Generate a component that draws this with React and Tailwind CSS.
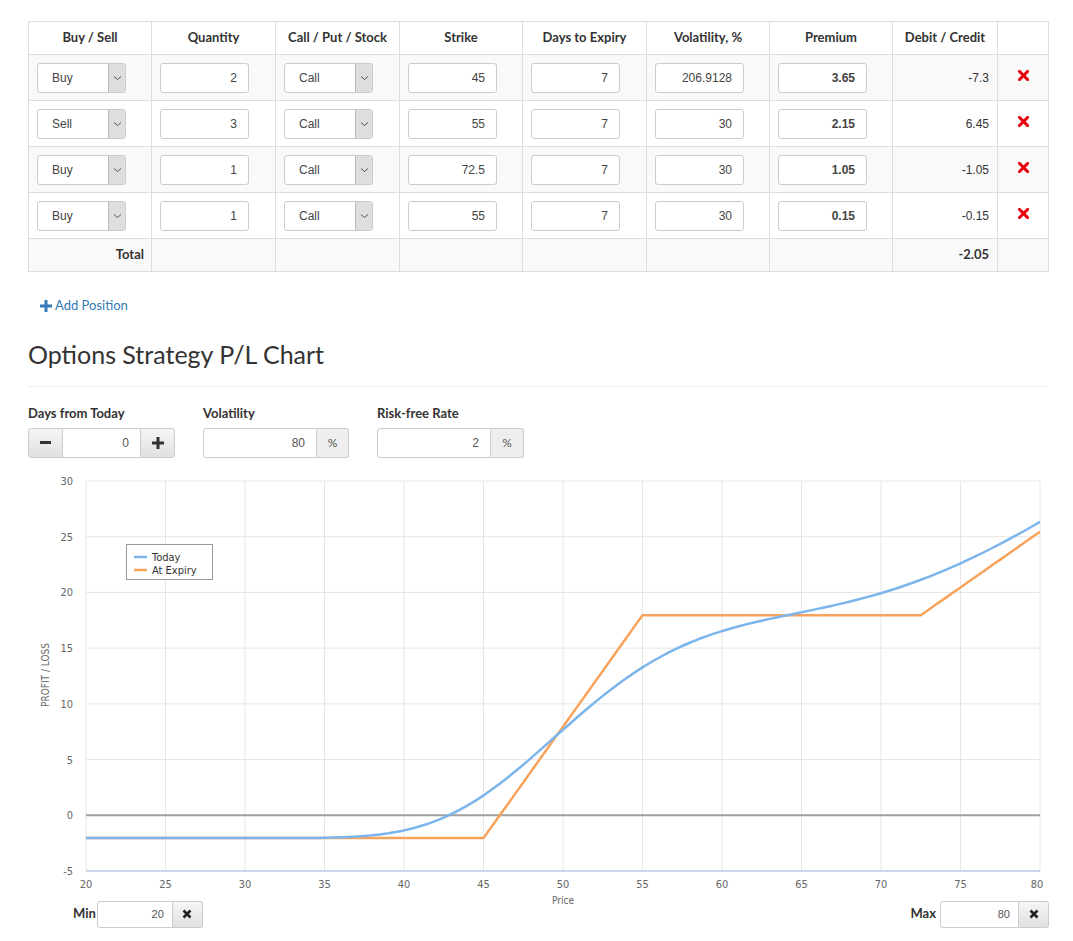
import React from "react";

const legs = [
  { side: "Buy", qty: 2, type: "Call", strike: 45, days: 7, vol: "206.9128", premium: "3.65", dc: "-7.3" },
  { side: "Sell", qty: 3, type: "Call", strike: 55, days: 7, vol: "30", premium: "2.15", dc: "6.45" },
  { side: "Buy", qty: 1, type: "Call", strike: 72.5, days: 7, vol: "30", premium: "1.05", dc: "-1.05" },
  { side: "Buy", qty: 1, type: "Call", strike: 55, days: 7, vol: "30", premium: "0.15", dc: "-0.15" },
];

const headers = ["Buy / Sell", "Quantity", "Call / Put / Stock", "Strike", "Days to Expiry", "Volatility, %", "Premium", "Debit / Credit", ""];
const widths = ["w-[123px]", "w-[124px]", "w-[124px]", "w-[123px]", "w-[124px]", "w-[123px]", "w-[123px]", "w-[105px]", "w-[51px]"];

// normal cdf
const ncdf = (x) => {
  const t = 1 / (1 + 0.2316419 * Math.abs(x));
  const d = 0.3989423 * Math.exp((-x * x) / 2);
  const p = d * t * (0.3193815 + t * (-0.3565638 + t * (1.781478 + t * (-1.821256 + t * 1.330274))));
  return x > 0 ? 1 - p : p;
};

const callPrice = (S, K, T, r, v) => {
  const sq = v * Math.sqrt(T);
  const d1 = (Math.log(S / K) + (r + (v * v) / 2) * T) / sq;
  const d2 = d1 - sq;
  return S * ncdf(d1) - K * Math.exp(-r * T) * ncdf(d2);
};

const pl = (S, today) => {
  let total = -2.05;
  legs.forEach((l) => {
    const sign = l.side === "Buy" ? 1 : -1;
    const val = today ? callPrice(S, l.strike, 7 / 365, 0.02, 0.8) : Math.max(S - l.strike, 0);
    total += sign * l.qty * val;
  });
  return total;
};

const X0 = 58;
const X1 = 1012;
const Y0 = 11;
const Y1 = 401;
const px = (s) => X0 + ((s - 20) * (X1 - X0)) / 60;
const py = (v) => Y0 + ((30 - v) * (Y1 - Y0)) / 35;

const buildPath = (today) => {
  const pts = [];
  for (let s = 20; s <= 80.001; s += 0.5) pts.push(`${px(s).toFixed(1)},${py(pl(s, today)).toFixed(1)}`);
  return "M" + pts.join(" L");
};

const Chevron = () => (
  <svg width="9" height="6" viewBox="0 0 9 6">
    <path d="M1 1.5 L4.5 4.5 L8 1.5" fill="none" stroke="#555" strokeWidth="1" />
  </svg>
);

const Select = ({ value }) => (
  <div className="flex h-[30px] w-[89px] rounded-[3px] border border-[#ccc] bg-white overflow-hidden">
    <div className="flex-1 flex items-center pl-[14px] text-[12px] text-[#444] font-['Liberation_Sans',sans-serif]">{value}</div>
    <div className="w-[17px] flex items-center justify-center bg-[#dedede] border-l border-[#bbb]">
      <Chevron />
    </div>
  </div>
);

const NumInput = ({ value, bold }) => (
  <div
    className={`flex h-[30px] w-[89px] items-center justify-end pr-[11px] rounded-[3px] border border-[#ccc] bg-white text-[12px] text-[#444] font-['Liberation_Sans',sans-serif] ${
      bold ? "font-bold text-[#333]" : ""
    }`}
  >
    {value}
  </div>
);

const RedX = () => (
  <svg width="11" height="11" viewBox="0 0 12 12">
    <path d="M1.5 1.5 L10.5 10.5 M10.5 1.5 L1.5 10.5" stroke="#e8000b" strokeWidth="3.2" strokeLinecap="square" />
  </svg>
);

const Plus = ({ color = "#333", size = 12 }) => (
  <svg width={size} height={size} viewBox="0 0 12 12">
    <path d="M4.5 0 H7.5 V4.5 H12 V7.5 H7.5 V12 H4.5 V7.5 H0 V4.5 H4.5 Z" fill={color} />
  </svg>
);

const DarkX = () => (
  <svg width="10" height="10" viewBox="0 0 10 10">
    <path d="M1.5 1.5 L8.5 8.5 M8.5 1.5 L1.5 8.5" stroke="#222" strokeWidth="2.6" />
  </svg>
);

const btn = "flex items-center justify-center border border-[#ccc] bg-linear-to-b from-[#f6f6f6] to-[#e0e0e0]";

const Chart = () => {
  const xs = [20, 25, 30, 35, 40, 45, 50, 55, 60, 65, 70, 75, 80];
  const ys = [30, 25, 20, 15, 10, 5, 0, -5];
  const tf = "'DejaVu Sans Condensed','DejaVu Sans',sans-serif";
  return (
    <svg width="1020" height="440" viewBox="0 0 1020 440" className="block">
      {ys.map((v) => (
        <line key={v} x1={X0} x2={X1} y1={py(v)} y2={py(v)} stroke="#e6e6e6" strokeWidth="1" />
      ))}
      {xs.map((s) => (
        <line key={s} x1={px(s)} x2={px(s)} y1={Y0} y2={Y1} stroke="#e6e6e6" strokeWidth="1" />
      ))}
      <line x1={X0} x2={X1} y1={Y1} y2={Y1} stroke="#ccd6eb" strokeWidth="2" />
      <line x1={X0} x2={X1} y1={py(0)} y2={py(0)} stroke="#a0a0a0" strokeWidth="2" />
      {ys.map((v) => (
        <text key={v} x={45} y={py(v) + 4} textAnchor="end" fontSize="11" fill="#666" fontFamily={tf}>
          {v}
        </text>
      ))}
      {xs.map((s) => (
        <text key={s} x={s === 80 ? px(s) - 3 : px(s)} y={418} textAnchor="middle" fontSize="11" fill="#666" fontFamily={tf}>
          {s}
        </text>
      ))}
      <text x={535} y={434} textAnchor="middle" fontSize="10" fill="#666" fontFamily={tf}>
        Price
      </text>
      <text x={21} y={205} textAnchor="middle" fontSize="10" fill="#666" fontFamily={tf} transform="rotate(-90 21 205)">
        PROFIT / LOSS
      </text>
      <path d={buildPath(false)} fill="none" stroke="#f7a35c" strokeWidth="2.5" strokeLinejoin="round" />
      <path d={buildPath(true)} fill="none" stroke="#7cb5ec" strokeWidth="2.5" strokeLinejoin="round" />
      <rect x="98.5" y="74.5" width="86" height="35" fill="white" stroke="#999" strokeWidth="1" />
      <line x1="106" x2="119" y1="87" y2="87" stroke="#7cb5ec" strokeWidth="2.5" />
      <line x1="106" x2="119" y1="100" y2="100" stroke="#f7a35c" strokeWidth="2.5" />
      <text x="124" y="91" fontSize="11" fill="#333" fontFamily={tf}>
        Today
      </text>
      <text x="124" y="104" fontSize="11" fill="#333" fontFamily={tf}>
        At Expiry
      </text>
    </svg>
  );
};

export default function App() {
  return (
    <div className="bg-white min-h-[941px] pl-[28px] pr-[25px] pt-[21px] text-[#333] font-['Source_Sans_Pro',Lato,sans-serif]">
      <table className="border-collapse table-fixed w-[1020px]">
        <thead>
          <tr className="h-[33px] bg-white">
            {headers.map((h, i) => (
              <th key={i} className={`${widths[i]} border border-[#ddd] text-[13px] font-bold text-center align-middle`}>
                {h}
              </th>
            ))}
          </tr>
        </thead>
        <tbody>
          {legs.map((l, i) => (
            <tr key={i} className={`h-[46px] ${i % 2 === 0 ? "bg-[#f9f9f9]" : "bg-white"}`}>
              <td className="border border-[#ddd] pl-[8px]">
                <Select value={l.side} />
              </td>
              <td className="border border-[#ddd] pl-[8px]">
                <NumInput value={l.qty} />
              </td>
              <td className="border border-[#ddd] pl-[8px]">
                <Select value={l.type} />
              </td>
              <td className="border border-[#ddd] pl-[8px]">
                <NumInput value={l.strike} />
              </td>
              <td className="border border-[#ddd] pl-[8px]">
                <NumInput value={l.days} />
              </td>
              <td className="border border-[#ddd] pl-[8px]">
                <NumInput value={l.vol} />
              </td>
              <td className="border border-[#ddd] pl-[8px]">
                <NumInput value={l.premium} bold />
              </td>
              <td className="border border-[#ddd] pr-[8px] text-right text-[12px] text-[#333] font-['Liberation_Sans',sans-serif]">{l.dc}</td>
              <td className="border border-[#ddd]">
                <div className="flex justify-center -mt-[4px]">
                  <RedX />
                </div>
              </td>
            </tr>
          ))}
          <tr className="h-[33px] bg-[#f9f9f9]">
            <td className="border border-[#ddd] pr-[7px] text-right text-[13px] font-bold">Total</td>
            <td className="border border-[#ddd]"></td>
            <td className="border border-[#ddd]"></td>
            <td className="border border-[#ddd]"></td>
            <td className="border border-[#ddd]"></td>
            <td className="border border-[#ddd]"></td>
            <td className="border border-[#ddd]"></td>
            <td className="border border-[#ddd] pr-[8px] text-right text-[13px] font-bold">-2.05</td>
            <td className="border border-[#ddd]"></td>
          </tr>
        </tbody>
      </table>

      <div className="mt-[24px] ml-[12px] flex items-center gap-[3px] text-[13px] text-[#337ab7]">
        <Plus color="#337ab7" size={12} />
        <span>Add Position</span>
      </div>

      <h2 className="mt-[23px] text-[25px] leading-[30px] font-normal text-[#333]">Options Strategy P/L Chart</h2>
      <div className="mt-[17px] border-t border-[#eee] w-[1020px]"></div>

      <div className="mt-[18px] flex gap-[28px]">
        <div className="flex flex-col gap-[7px]">
          <label className="text-[13px] font-bold leading-[16px]">Days from Today</label>
          <div className="flex h-[30px]">
            <div className={`${btn} w-[35px] rounded-l-[3px]`}>
              <div className="w-[11px] h-[3px] bg-[#333]"></div>
            </div>
            <div className="w-[77px] border-y border-[#ccc] bg-white flex items-center justify-end pr-[11px] text-[12px] text-[#555] font-['Liberation_Sans',sans-serif]">0</div>
            <div className={`${btn} w-[35px] rounded-r-[3px]`}>
              <Plus size={12} />
            </div>
          </div>
        </div>
        <div className="flex flex-col gap-[7px]">
          <label className="text-[13px] font-bold leading-[16px]">Volatility</label>
          <div className="flex h-[30px]">
            <div className="w-[114px] rounded-l-[3px] border border-[#ccc] bg-white flex items-center justify-end pr-[11px] text-[12px] text-[#555] font-['Liberation_Sans',sans-serif]">80</div>
            <div className="w-[32px] rounded-r-[3px] border border-l-0 border-[#ccc] bg-[#eee] flex items-center justify-center text-[12px] text-[#555]">%</div>
          </div>
        </div>
        <div className="flex flex-col gap-[7px]">
          <label className="text-[13px] font-bold leading-[16px]">Risk-free Rate</label>
          <div className="flex h-[30px]">
            <div className="w-[114px] rounded-l-[3px] border border-[#ccc] bg-white flex items-center justify-end pr-[11px] text-[12px] text-[#555] font-['Liberation_Sans',sans-serif]">2</div>
            <div className="w-[33px] rounded-r-[3px] border border-l-0 border-[#ccc] bg-[#eee] flex items-center justify-center text-[12px] text-[#555]">%</div>
          </div>
        </div>
      </div>

      <div className="mt-[12px]">
        <Chart />
      </div>

      <div className="-mt-[9px] w-[1021px] flex items-center justify-between pl-[45px]">
        <div className="flex items-center gap-[1px]">
          <span className="text-[13px] font-bold">Min</span>
          <div className="flex h-[27px]">
            <div className="w-[76px] rounded-l-[3px] border border-[#ccc] bg-white flex items-center justify-end pr-[8px] text-[11px] text-[#555] font-['Liberation_Sans',sans-serif]">20</div>
            <div className={`${btn} w-[30px] border-l-0 rounded-r-[3px]`}>
              <DarkX />
            </div>
          </div>
        </div>
        <div className="flex items-center gap-[4px]">
          <span className="text-[13px] font-bold">Max</span>
          <div className="flex h-[27px]">
            <div className="w-[79px] rounded-l-[3px] border border-[#ccc] bg-white flex items-center justify-end pr-[8px] text-[11px] text-[#555] font-['Liberation_Sans',sans-serif]">80</div>
            <div className={`${btn} w-[30px] border-l-0 rounded-r-[3px]`}>
              <DarkX />
            </div>
          </div>
        </div>
      </div>
    </div>
  );
}
